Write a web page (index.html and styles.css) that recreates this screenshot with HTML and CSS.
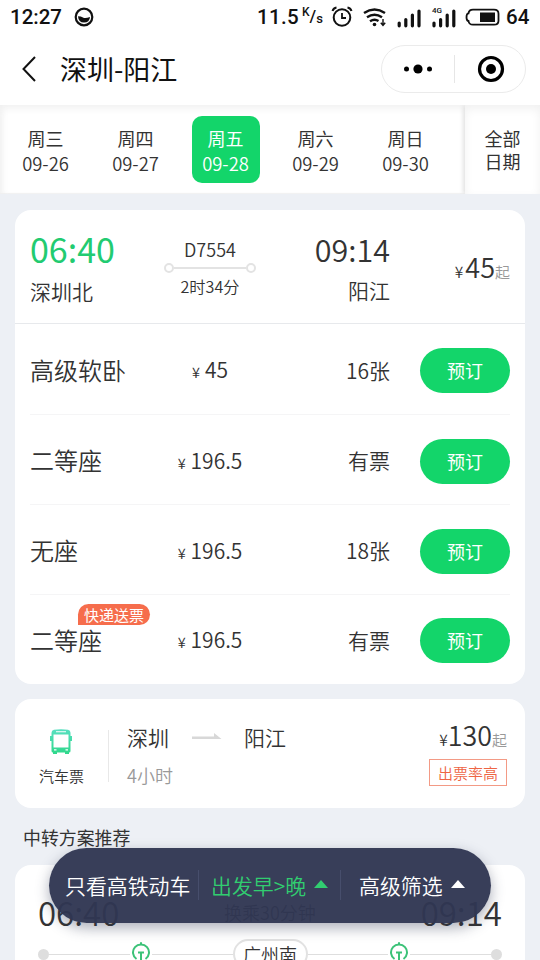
FILE: index.html
```html
<!DOCTYPE html>
<html lang="zh-CN">
<head>
<meta charset="utf-8">
<title>深圳-阳江</title>
<link rel="stylesheet" href="styles.css">
</head>
<body>
<div class="app">
  <header class="top">
    <div class="status">
      <span class="clock">12:27</span>
      <svg class="face" width="20" height="20" viewBox="0 0 20 20"><circle cx="10" cy="10" r="8.3" fill="none" stroke="#111" stroke-width="2.2"/><path d="M4 9.200q3 0 5 1.200t7-.4q-.4 5.500-6 5.500T4 9.200z" fill="#111"/></svg>
      <span class="speed">11.5</span>
      <span class="unit"><i class="k">K</i><i class="slash">/</i><i class="s">s</i></span>
      <svg class="sicons" width="175" height="24" viewBox="0 0 175 24" fill="none" stroke="#111">
        <circle cx="11" cy="12.500" r="8.300" stroke-width="2"/><path d="M11 8v5h4" stroke-width="1.800"/><path d="M1.500 6q1-3 4-3.500M20.500 6q-1-3-4-3.500" stroke-width="2"/>
        <path d="M33 8q10.500-7 21 0M36 12.300q7.500-5 15 0M39 16.300q4.500-3 8.500-.3" stroke-width="2.400"/><circle cx="43.500" cy="19.500" r="1.800" fill="#111" stroke="none"/><path d="M52 14v6M49.800 17.800 52 20.500l2.200-2.700" stroke-width="1.400"/>
        <path d="M68.200 18v2.800M74.800 14.500v6.300M81.400 10v10.800M88 6v14.800" stroke-width="3.200" stroke-linecap="round"/>
        <path d="M103 18v2.800M109.600 14.500v6.300M116.200 10v10.800M122.800 6v14.800" stroke-width="3.200" stroke-linecap="round"/>
        <path d="M142 4.700h21q4.500 0 4.500 4v7q0 4-4.500 4h-21q-4 0-4.500-3.700-2 0-2-3.800t2-3.800Q138 4.700 142 4.700z" stroke-width="1.800"/><path d="M149 7.500h15v9.500h-15z" fill="#111" stroke="none"/>
      </svg>
      <span class="net">4G</span>
      <span class="battery">64</span>
    </div>
    <div class="nav">
      <svg class="back" width="16" height="28" viewBox="0 0 16 28"><path d="M14 2 2.500 14 14 26" fill="none" stroke="#111" stroke-width="2"/></svg>
      <h1>深圳-阳江</h1>
      <div class="capsule">
        <svg width="30" height="12" viewBox="0 0 30 12"><circle cx="3.500" cy="6" r="2.500"/><circle cx="15" cy="6" r="4.600"/><circle cx="26.500" cy="6" r="2.500"/></svg>
        <span class="capsule-line"></span>
        <svg width="28" height="28" viewBox="0 0 28 28"><circle cx="14" cy="14" r="11.500" fill="none" stroke="#000" stroke-width="3.200"/><circle cx="14" cy="14" r="5"/></svg>
      </div>
    </div>
  </header>

  <section class="dates">
    <div class="day"><b>周三</b><span>09-26</span></div>
    <div class="day"><b>周四</b><span>09-27</span></div>
    <div class="day active"><b>周五</b><span>09-28</span></div>
    <div class="day"><b>周六</b><span>09-29</span></div>
    <div class="day"><b>周日</b><span>09-30</span></div>
    <div class="all">全部<br>日期</div>
  </section>

  <section class="card train">
    <div class="summary">
      <div class="from"><div class="time">06:40</div><div class="station">深圳北</div></div>
      <div class="trip"><div class="no">D7554</div><div class="track"><i></i><u></u><i></i></div><div class="duration">2时34分</div></div>
      <div class="to"><div class="time">09:14</div><div class="station">阳江</div></div>
      <div class="lowest"><small>¥</small>45<em>起</em></div>
    </div>
    <div class="seat"><span class="name">高级软卧</span><span class="price"><small>¥</small>45</span><span class="left">16张</span><span class="book">预订</span></div>
    <div class="seat"><span class="name">二等座</span><span class="price"><small>¥</small>196.5</span><span class="left">有票</span><span class="book">预订</span></div>
    <div class="seat"><span class="name">无座</span><span class="price"><small>¥</small>196.5</span><span class="left">18张</span><span class="book">预订</span></div>
    <div class="seat"><span class="name">二等座<span class="express">快递送票</span></span><span class="price"><small>¥</small>196.5</span><span class="left">有票</span><span class="book">预订</span></div>
  </section>

  <section class="card bus">
    <div class="kind">
      <svg width="24" height="26" viewBox="0 0 24 26">
        <defs><linearGradient id="g" x1="0" y1="0" x2="0" y2="1"><stop offset="0" stop-color="#58dfc0"/><stop offset="1" stop-color="#2fd88b"/></linearGradient></defs>
        <path fill="url(#g)" fill-rule="evenodd" d="M5 .8Q12-.4 19 .8q2.500.6 2.500 3V7H23v5h-1.500V22q0 1.500-1.500 1.500V25h-4v-1.500H8V25H4v-1.500Q2.500 23.500 2.500 22V12H1V7h1.500V3.800q0-2.400 2.500-3zM7 2.300v.9h10v-.9zM4.500 5.500v13h15v-13zM5 20.300v1.200h2.500v-1.200zM16.500 20.300v1.200H19v-1.200z"/>
      </svg>
      <span>汽车票</span>
    </div>
    <div class="route">
      <div class="cities">深圳<svg width="30" height="8" viewBox="0 0 30 8"><path d="M0 3.500h22V0L29.500 6H0z" fill="#d8d8d8"/></svg>阳江</div>
      <div class="hours">4小时</div>
    </div>
    <div class="fare">
      <div class="lowest"><small>¥</small>130<em>起</em></div>
      <div class="rate">出票率高</div>
    </div>
  </section>

  <h2>中转方案推荐</h2>

  <section class="card transfer">
    <div class="times"><span>06:40</span><span class="wait">换乘30分钟</span><span>09:14</span></div>
    <div class="stops">
      <i class="dot"></i><u></u>
      <svg width="20" height="24" viewBox="0 0 20 24" fill="none" stroke="#3cc278" stroke-width="2"><path d="M5.500 17A8 8 0 1 1 14.500 17M7 10.500h6M10 10.500V20" /><path d="M10 .3v2" /></svg>
      <u></u><span class="via">广州南</span><u></u>
      <svg width="20" height="24" viewBox="0 0 20 24" fill="none" stroke="#3cc278" stroke-width="2"><path d="M5.500 17A8 8 0 1 1 14.500 17M7 10.500h6M10 10.500V20" /><path d="M10 .3v2" /></svg>
      <u></u><i class="dot"></i>
    </div>
  </section>

  <div class="filter">
    <span class="only">只看高铁动车</span>
    <span class="sort">出发早&gt;晚<i></i></span>
    <span class="more">高级筛选<i></i></span>
  </div>
</div>
</body>
</html>
```
FILE: styles.css
```css
* { box-sizing: border-box; }
body { margin: 0; background: #edf0f5; color: #333; font-family: "Noto Sans CJK SC", sans-serif; font-weight: 350; }
i, em { font-style: normal; }
svg { display: block; flex: none; }
.app { position: relative; width: 540px; height: 960px; overflow: hidden; }

.top { height: 105px; background: #fff; }
.status { position: relative; display: flex; align-items: center; height: 34px; padding-left: 10px; color: #111; font: 500 20.500px/34px Roboto, sans-serif; }
.clock { width: 64px; }
.speed { width: 46px; margin-left: 163px; letter-spacing: .3px; }
.unit { display: flex; width: 28px; height: 24px; font-size: 13px; line-height: 14px; }
.unit .k { margin-left: -1px; font-size: 12px; }
.unit .slash { font-size: 17px; line-height: 23px; }
.unit .s { line-height: 28px; }
.net { position: absolute; left: 432px; top: 6px; font-size: 8px; line-height: 10px; }
.battery { width: 28px; }
.nav { display: flex; align-items: center; height: 71px; padding: 0 14px 2px 21px; }
.nav h1 { margin: 0 auto 0 23px; color: #111; font-size: 27px; line-height: 40px; font-weight: 400; }
.capsule { display: flex; align-items: center; justify-content: space-between; width: 145px; height: 48px; padding: 0 21px; border: 1px solid #ebebeb; border-radius: 24px; }
.capsule-line { width: 1px; height: 28px; margin-left: 4px; margin-right: 5px; background: #e6e6e6; }
.capsule svg:last-child { margin-right: -1px; }

.dates { display: flex; height: 89px; background: #fff; box-shadow: inset 0 5px 8px -2px #f0f0f0, inset 6px 0 8px -5px #eee, inset 0 -1px 1px #f1f1f1; font-size: 18px; }
.day { display: flex; flex-direction: column; align-items: center; width: 68px; height: 67px; margin: 11px 10.500px 0 11.500px; padding-top: 9px; border-radius: 10px; line-height: 26px; }
.day b { font-weight: 400; }
.day span { font-size: 18.400px; line-height: 25px; }
.day.active { background: #13d56a; color: #fff; }
.all { width: 75px; margin-left: 15px; padding-top: 22px; background: #fff; box-shadow: -2px 0 4px #e2e2e2, inset 0 4px 10px #f1f1f1; clip-path: inset(0 0 0 -8px); line-height: 22.500px; text-align: center; font-weight: 400; }

.card { margin: 0 15px; background: #fff; border-radius: 16px; }
.train { height: 474px; margin-top: 16px; }
.summary { display: flex; height: 114px; padding: 0 15px; border-bottom: 1px solid #e7e9ec; }
.from { width: 134px; padding-top: 18px; }
.from .time { color: #22cb71; font-size: 34px; line-height: 42px; font-weight: 400; }
.from .station { font-size: 21px; line-height: 43px; }
.trip { width: 92px; padding-top: 26px; text-align: center; }
.no { font-size: 18px; line-height: 26px; height: 27px; }
.track { display: flex; align-items: center; height: 10px; }
.track i { width: 10px; height: 10px; border: 2px solid #e3e3e3; border-radius: 50%; }
.track u { flex: 1; height: 2px; background: #e3e3e3; }
.duration { font-size: 16.200px; line-height: 26px; }
.to { width: 134px; padding-top: 18px; text-align: right; }
.to .time { font-size: 30.500px; line-height: 42px; }
.to .station { font-size: 21px; line-height: 41px; }
.summary .lowest { width: 120px; padding-top: 36.500px; }
.lowest { font-size: 27px; line-height: 40px; text-align: right; white-space: nowrap; }
.lowest small { margin-right: 2px; font-size: 15.500px; }
.lowest em { color: #999; font-size: 15px; }
.seat { display: flex; align-items: center; height: 90px; margin: 0 15px; padding-top: 3px; border-bottom: 1px solid #f5f5f6; }
.summary + .seat { height: 91px; }
.seat:last-child { height: 89px; padding-top: 2px; border: 0; }
.name { position: relative; width: 120px; font-size: 24px; line-height: 36px; margin-top: -2px; }
.price { width: 120px; text-align: center; font-size: 21px; line-height: 30px; }
.price small { margin-right: 5px; font-size: 14.500px; }
.left { width: 120px; margin-top: -2px; text-align: right; font-size: 21px; line-height: 30px; }
.book { width: 90px; height: 45px; margin-left: 30px; border-radius: 23px; background: #13d56a; color: #fff; font-size: 18px; line-height: 45px; text-align: center; font-weight: 400; }
.seat:last-child .book { margin-top: -1px; }
.express { position: absolute; left: 48px; top: -18px; width: 72px; height: 21px; border-radius: 11px 11px 11px 0; background: #f66d4c; color: #fff; font-size: 15px; line-height: 21px; text-align: center; font-weight: 400; }

.bus { display: flex; height: 109px; margin-top: 15px; }
.kind { display: flex; flex-direction: column; align-items: center; width: 93px; padding-top: 30px; font-size: 15px; }
.kind svg { margin-right: 2px; }
.kind span { line-height: 22px; margin-top: 10px; }
.route { width: 220px; height: 52px; margin-top: 31px; padding-left: 18px; border-left: 1px solid #e8e8e8; }
.cities { display: flex; align-items: center; gap: 22.500px; margin-top: -8px; font-size: 21px; line-height: 30px; }
.hours { margin-top: 11px; color: #999; font-size: 18px; line-height: 24px; }
.fare { width: 179px; height: 100px; padding-top: 17px; }
.bus .lowest { height: 43px; font-size: 26.800px; line-height: 38px; }
.bus .lowest small { margin-right: 0; }
.rate { width: 78px; height: 27px; margin: 0 0 0 101px; border: 1px solid #f39a85; color: #ee6544; font-size: 15px; line-height: 25px; text-align: center; }

h2 { margin: 16px 23px 0; font-size: 17.900px; line-height: 26px; font-weight: 400; }
.transfer { height: 140px; margin-top: 15px; padding: 23px 23px 0; }
.times { display: flex; align-items: center; justify-content: space-between; font-size: 33px; line-height: 48px; }
.wait { color: #444; font-size: 18px; }
.stops { display: flex; align-items: center; height: 36px; }
.stops .dot { width: 11px; height: 11px; border-radius: 50%; background: #dedede; }
.stops u { flex: 1; height: 1px; background: #dedede; }
.stops svg { margin: 0 1px; }
.via { width: 75px; height: 30px; border: 2px solid #e2e2e2; border-radius: 15px; font-size: 18px; line-height: 26px; text-align: center; }

.filter { position: absolute; left: 49px; top: 848px; display: flex; align-items: center; width: 442px; height: 75px; padding-bottom: 1px; border-radius: 38px; background: rgba(48, 54, 82, .96); box-shadow: 0 5px 14px rgba(48, 54, 82, .4); color: #fff; font-size: 20.900px; line-height: 30px; white-space: nowrap; }
.filter span { display: flex; align-items: center; }
.only { width: 149px; padding-left: 16px; }
.sort { width: 142px; padding-left: 12px; color: #31cd70; }
.more { padding-left: 18px; }
.sort, .more { border-left: 1px solid #474e6c; }
.filter i { margin: -3px 0 0 8px; border: 7.500px solid transparent; border-top: 0; border-bottom: 8px solid currentColor; }
.sort i { border-bottom-color: #31cd70; }
.more i { border-bottom-color: #fff; }
```
